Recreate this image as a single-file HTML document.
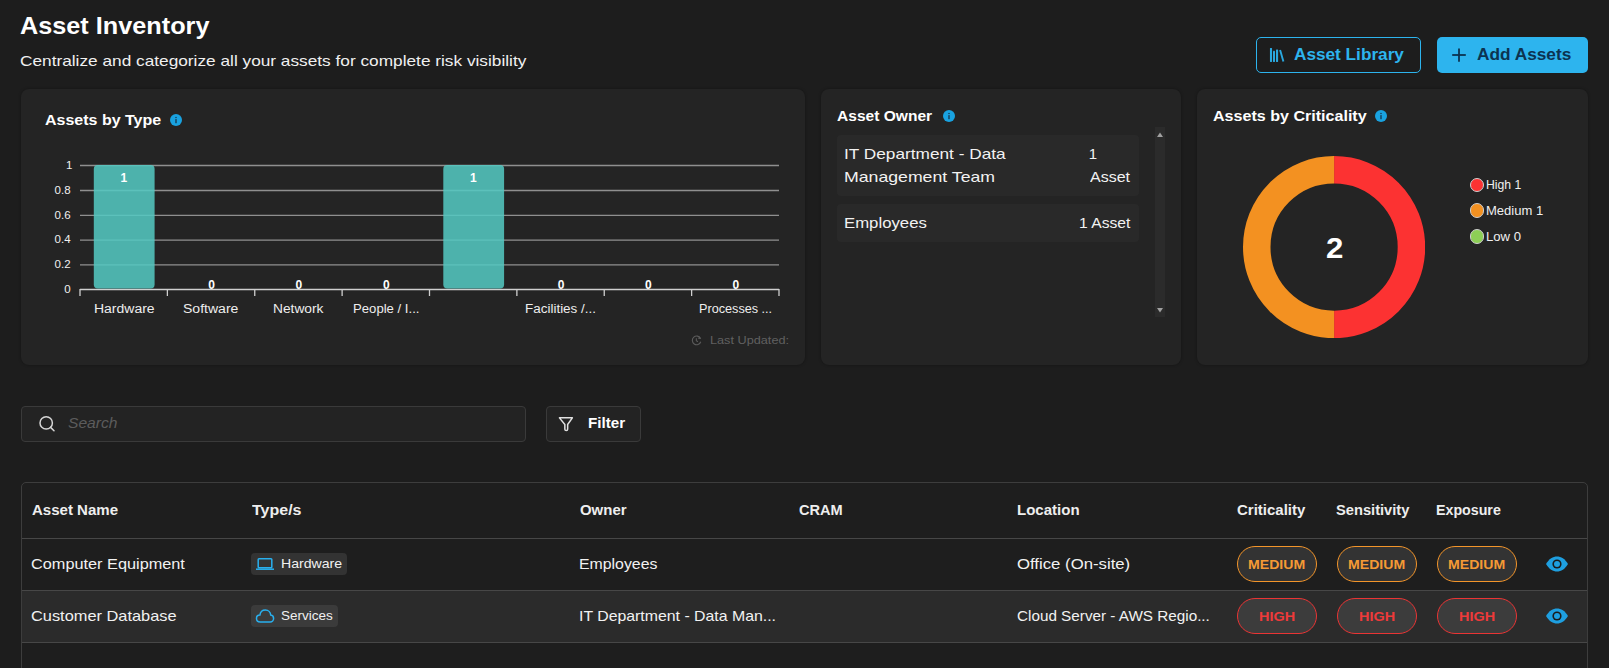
<!DOCTYPE html>
<html><head><meta charset="utf-8"><title>Asset Inventory</title>
<style>
html,body{margin:0;padding:0;}
body{width:1609px;height:668px;overflow:hidden;background:#1d1d1d;position:relative;font-family:"Liberation Sans",sans-serif;}
.a{position:absolute;box-sizing:border-box;}
.t{position:absolute;white-space:nowrap;line-height:1;transform-origin:0 0;}
</style></head><body>

<div class="a" style="left:1256px;top:37px;width:165px;height:36px;border:1px solid #2db4ee;border-radius:5px;"></div>
<div class="a" style="left:1437px;top:37px;width:151px;height:36px;background:#2db4ee;border-radius:5px;"></div>
<svg class="a" style="left:1268px;top:46px" width="18" height="18" viewBox="0 0 18 18"><g fill="#2aa8df"><rect x="1.95" y="1.9" width="2.1" height="14.1" rx="0.4"/><rect x="5.0" y="4.8" width="2.0" height="11.2" rx="0.4"/><rect x="8.0" y="3.6" width="2.1" height="12.4" rx="0.4"/></g><line x1="12.1" y1="3.9" x2="15.4" y2="15.6" stroke="#2aa8df" stroke-width="1.9"/></svg>
<svg class="a" style="left:1450px;top:46px" width="18" height="18" viewBox="0 0 18 18"><g stroke="#0c3350" stroke-width="1.8"><line x1="9" y1="2.5" x2="9" y2="15.7"/><line x1="2.2" y1="9" x2="15.8" y2="9"/></g></svg>
<div class="a" style="left:21px;top:89px;width:784px;height:276px;background:#242424;border-radius:8px;box-shadow:0 0 3px rgba(0,0,0,0.35);"></div>
<div class="a" style="left:821px;top:89px;width:360px;height:276px;background:#242424;border-radius:8px;box-shadow:0 0 3px rgba(0,0,0,0.35);"></div>
<div class="a" style="left:1197px;top:89px;width:391px;height:276px;background:#242424;border-radius:8px;box-shadow:0 0 3px rgba(0,0,0,0.35);"></div>
<svg class="a" style="left:170px;top:114px" width="12" height="12" viewBox="0 0 12 12"><circle cx="6" cy="6" r="6" fill="#19a2e0"/><rect x="5.25" y="5.1" width="1.5" height="4.1" fill="#17425e"/><rect x="5.25" y="2.9" width="1.5" height="1.2" fill="#17425e"/></svg>
<svg class="a" style="left:943px;top:110px" width="12" height="12" viewBox="0 0 12 12"><circle cx="6" cy="6" r="6" fill="#19a2e0"/><rect x="5.25" y="5.1" width="1.5" height="4.1" fill="#17425e"/><rect x="5.25" y="2.9" width="1.5" height="1.2" fill="#17425e"/></svg>
<svg class="a" style="left:1375px;top:110px" width="12" height="12" viewBox="0 0 12 12"><circle cx="6" cy="6" r="6" fill="#19a2e0"/><rect x="5.25" y="5.1" width="1.5" height="4.1" fill="#17425e"/><rect x="5.25" y="2.9" width="1.5" height="1.2" fill="#17425e"/></svg>
<svg class="a" style="left:0;top:0" width="805" height="366" viewBox="0 0 805 366"><line x1="80" y1="165.5" x2="779" y2="165.5" stroke="#8f8f8f" stroke-width="1.3"/><line x1="80" y1="190.5" x2="779" y2="190.5" stroke="#8f8f8f" stroke-width="1.3"/><line x1="80" y1="215.3" x2="779" y2="215.3" stroke="#8f8f8f" stroke-width="1.3"/><line x1="80" y1="240.1" x2="779" y2="240.1" stroke="#8f8f8f" stroke-width="1.3"/><line x1="80" y1="264.9" x2="779" y2="264.9" stroke="#8f8f8f" stroke-width="1.3"/><line x1="80" y1="289.5" x2="779" y2="289.5" stroke="#cfcfcf" stroke-width="1.3"/><line x1="80.00" y1="289" x2="80.00" y2="296" stroke="#cfcfcf" stroke-width="1.3"/><line x1="167.38" y1="289" x2="167.38" y2="296" stroke="#cfcfcf" stroke-width="1.3"/><line x1="254.75" y1="289" x2="254.75" y2="296" stroke="#cfcfcf" stroke-width="1.3"/><line x1="342.12" y1="289" x2="342.12" y2="296" stroke="#cfcfcf" stroke-width="1.3"/><line x1="429.50" y1="289" x2="429.50" y2="296" stroke="#cfcfcf" stroke-width="1.3"/><line x1="516.88" y1="289" x2="516.88" y2="296" stroke="#cfcfcf" stroke-width="1.3"/><line x1="604.25" y1="289" x2="604.25" y2="296" stroke="#cfcfcf" stroke-width="1.3"/><line x1="691.62" y1="289" x2="691.62" y2="296" stroke="#cfcfcf" stroke-width="1.3"/><line x1="779.00" y1="289" x2="779.00" y2="296" stroke="#cfcfcf" stroke-width="1.3"/><rect x="93.80" y="165" width="60.8" height="123.6" rx="4" fill="rgba(84,202,194,0.86)"/><rect x="443.30" y="165" width="60.8" height="123.6" rx="4" fill="rgba(84,202,194,0.86)"/></svg>
<svg class="a" style="left:690.1px;top:334.1px" width="13" height="13" viewBox="0 0 15 15"><path d="M12.2 5.2 A5 5 0 1 0 12.4 9" stroke="#5c5c5c" stroke-width="1.3" fill="none"/><path d="M10.6 2.6 L12.9 5.6 L9.4 5.9Z" fill="#5c5c5c"/><path d="M7.3 4.8 V7.8 L9.2 9" stroke="#5c5c5c" stroke-width="1.2" fill="none"/></svg>
<div class="a" style="left:837px;top:135px;width:302px;height:61px;background:#292929;border-radius:4px;"></div>
<div class="a" style="left:837px;top:204px;width:302px;height:38px;background:#292929;border-radius:4px;"></div>
<div class="a" style="left:1155px;top:127px;width:10px;height:190px;background:#2b2b2b;"></div>
<svg class="a" style="left:1155px;top:127px" width="10" height="190" viewBox="0 0 10 190"><path d="M2 10 L5 5.5 L8 10Z" fill="#a0a0a0"/><path d="M2 181 L5 185.5 L8 181Z" fill="#a0a0a0"/></svg>
<svg class="a" style="left:1243.2px;top:156.20000000000002px" width="182.2" height="182.2" viewBox="0 0 182.2 182.2"><path d="M91.1 13.75 A77.35 77.35 0 0 1 91.1 168.45" stroke="#fc3232" stroke-width="27.499999999999993" fill="none"/><path d="M91.1 168.45 A77.35 77.35 0 0 1 91.1 13.75" stroke="#f39121" stroke-width="27.499999999999993" fill="none"/></svg>
<div class="a" style="left:1469.6px;top:177.6px;width:14.8px;height:14.8px;border-radius:50%;background:#fc3232;border:1.3px solid #cfcfcf;"></div>
<div class="a" style="left:1469.6px;top:203.29999999999998px;width:14.8px;height:14.8px;border-radius:50%;background:#f39121;border:1.3px solid #cfcfcf;"></div>
<div class="a" style="left:1469.6px;top:229.1px;width:14.8px;height:14.8px;border-radius:50%;background:#8dcf56;border:1.3px solid #cfcfcf;"></div>
<div class="a" style="left:21px;top:406px;width:505px;height:36px;border:1px solid #3a3a3a;background:#232323;border-radius:4px;"></div>
<svg class="a" style="left:36px;top:413px" width="22" height="22" viewBox="0 0 22 22"><circle cx="10.2" cy="9.9" r="6.2" stroke="#d6d6d6" stroke-width="1.5" fill="none"/><line x1="14.6" y1="14.4" x2="18" y2="17.8" stroke="#d6d6d6" stroke-width="1.5" stroke-linecap="round"/></svg>
<div class="a" style="left:546px;top:406px;width:95px;height:36px;border:1px solid #3a3a3a;background:#232323;border-radius:4px;"></div>
<svg class="a" style="left:556px;top:414px" width="20" height="20" viewBox="0 0 20 20"><path d="M3.45 3.85 H16.35 L11.65 10.5 V15.2 A1.4 1.4 0 0 1 8.85 15.2 V10.5 Z" stroke="#e0e0e0" stroke-width="1.5" fill="none" stroke-linejoin="round"/></svg>
<div class="a" style="left:21px;top:482px;width:1567px;height:200px;border:1px solid #3d3d3d;border-radius:5px;background:#1e1e1e;"></div>
<div class="a" style="left:22px;top:591px;width:1565px;height:51px;background:#2b2b2b;"></div>
<div class="a" style="left:22px;top:538px;width:1565px;height:1px;background:#474747;"></div>
<div class="a" style="left:22px;top:590px;width:1565px;height:1px;background:#474747;"></div>
<div class="a" style="left:22px;top:642px;width:1565px;height:1px;background:#474747;"></div>
<div class="a" style="left:251px;top:553px;width:96px;height:22px;background:#333333;border-radius:4px;"></div>
<div class="a" style="left:251px;top:605px;width:87px;height:22px;background:#3b3b3b;border-radius:4px;"></div>
<svg class="a" style="left:255px;top:556px" width="20" height="16" viewBox="0 0 20 16"><rect x="3.2" y="2.8" width="13.6" height="9" rx="0.8" stroke="#29b0ee" stroke-width="1.5" fill="none"/><line x1="1" y1="13.2" x2="19" y2="13.2" stroke="#29b0ee" stroke-width="1.5"/></svg>
<svg class="a" style="left:255px;top:607px" width="20" height="18" viewBox="0 0 20 18"><path d="M5.2 15 C2.8 15 1.5 13.3 1.5 11.5 C1.5 9.6 3 8.1 4.9 8.1 C5.3 5.1 7.6 3 10.4 3 C13.3 3 15.5 5.2 15.7 8 C17.3 8.2 18.6 9.6 18.6 11.5 C18.6 13.4 17.1 15 15.2 15 Z" stroke="#29b0ee" stroke-width="1.5" fill="none"/></svg>
<div class="a" style="left:1237px;top:546px;width:80px;height:36px;border:1.3px solid #f3952a;border-radius:18px;background:#333333;"></div>
<div class="a" style="left:1337px;top:546px;width:80px;height:36px;border:1.3px solid #f3952a;border-radius:18px;background:#333333;"></div>
<div class="a" style="left:1437px;top:546px;width:80px;height:36px;border:1.3px solid #f3952a;border-radius:18px;background:#333333;"></div>
<div class="a" style="left:1237px;top:598px;width:80px;height:36px;border:1.3px solid #ea3434;border-radius:18px;background:#3c3c3c;"></div>
<div class="a" style="left:1337px;top:598px;width:80px;height:36px;border:1.3px solid #ea3434;border-radius:18px;background:#3c3c3c;"></div>
<div class="a" style="left:1437px;top:598px;width:80px;height:36px;border:1.3px solid #ea3434;border-radius:18px;background:#3c3c3c;"></div>
<svg class="a" style="left:1545px;top:556px" width="24" height="16" viewBox="0 0 24 16"><path d="M1 8 C4 2.8 8 0.5 12 0.5 C16 0.5 20 2.8 23 8 C20 13.2 16 15.5 12 15.5 C8 15.5 4 13.2 1 8Z" fill="#1e9fe0"/><circle cx="12" cy="8" r="4.6" fill="#1b1b1b"/><circle cx="12" cy="8" r="3.0" fill="#1e9fe0"/></svg>
<svg class="a" style="left:1545px;top:608px" width="24" height="16" viewBox="0 0 24 16"><path d="M1 8 C4 2.8 8 0.5 12 0.5 C16 0.5 20 2.8 23 8 C20 13.2 16 15.5 12 15.5 C8 15.5 4 13.2 1 8Z" fill="#1e9fe0"/><circle cx="12" cy="8" r="4.6" fill="#1b1b1b"/><circle cx="12" cy="8" r="3.0" fill="#1e9fe0"/></svg>
<span class="t" id="t_title" style="left:20.15px;top:14.21px;font-size:24px;font-weight:700;color:#ffffff;transform:scaleX(1.0520);">Asset Inventory</span>
<span class="t" id="t_sub" style="left:20.05px;top:53.01px;font-size:15px;font-weight:400;color:#f0f0f0;transform:scaleX(1.1503);">Centralize and categorize all your assets for complete risk visibility</span>
<span class="t" id="t_lib" style="left:1294.20px;top:47.20px;font-size:16px;font-weight:700;color:#2db4ee;transform:scaleX(1.0745);">Asset Library</span>
<span class="t" id="t_add" style="left:1477.20px;top:46.81px;font-size:16px;font-weight:700;color:#0c3350;transform:scaleX(1.0782);">Add Assets</span>
<span class="t" id="t_c1" style="left:45.40px;top:112.90px;font-size:14.7px;font-weight:700;color:#ffffff;transform:scaleX(1.0887);">Assets by Type</span>
<span class="t" id="t_c2" style="left:836.90px;top:109.21px;font-size:14.7px;font-weight:700;color:#ffffff;transform:scaleX(1.0589);">Asset Owner</span>
<span class="t" id="t_c3" style="left:1213.00px;top:109.01px;font-size:14.7px;font-weight:700;color:#ffffff;transform:scaleX(1.0943);">Assets by Criticality</span>
<span class="t" id="t_o1" style="left:844.45px;top:146.01px;font-size:15px;font-weight:400;color:#f2f2f2;transform:scaleX(1.1493);">IT Department - Data</span>
<span class="t" id="t_o2" style="left:844.42px;top:168.81px;font-size:15px;font-weight:400;color:#f2f2f2;transform:scaleX(1.1787);">Management Team</span>
<span class="t" id="t_o3" style="left:1088.70px;top:146.01px;font-size:15px;font-weight:400;color:#f2f2f2;">1</span>
<span class="t" id="t_o4" style="left:1089.70px;top:168.81px;font-size:15px;font-weight:400;color:#f2f2f2;transform:scaleX(1.0658);">Asset</span>
<span class="t" id="t_o5" style="left:844.48px;top:215.42px;font-size:15px;font-weight:400;color:#f2f2f2;transform:scaleX(1.1164);">Employees</span>
<span class="t" id="t_o6" style="left:1079.06px;top:215.42px;font-size:15px;font-weight:400;color:#f2f2f2;transform:scaleX(1.0437);">1 Asset</span>
<span class="t" id="y0" style="left:65.90px;top:159.91px;font-size:11.5px;font-weight:400;color:#f0f0f0;">1</span>
<span class="t" id="y1" style="left:54.60px;top:184.91px;font-size:11.5px;font-weight:400;color:#f0f0f0;">0.8</span>
<span class="t" id="y2" style="left:54.60px;top:209.70px;font-size:11.5px;font-weight:400;color:#f0f0f0;">0.6</span>
<span class="t" id="y3" style="left:54.60px;top:234.41px;font-size:11.5px;font-weight:400;color:#f0f0f0;">0.4</span>
<span class="t" id="y4" style="left:54.60px;top:259.20px;font-size:11.5px;font-weight:400;color:#f0f0f0;">0.2</span>
<span class="t" id="y5" style="left:64.20px;top:283.91px;font-size:11.5px;font-weight:400;color:#f0f0f0;">0</span>
<span class="t" id="x0" style="left:93.64px;top:303.10px;font-size:12px;font-weight:400;color:#eeeeee;transform:scaleX(1.1647);">Hardware</span>
<span class="t" id="x1" style="left:183.43px;top:303.10px;font-size:12px;font-weight:400;color:#eeeeee;transform:scaleX(1.1696);">Software</span>
<span class="t" id="x2" style="left:273.15px;top:303.10px;font-size:12px;font-weight:400;color:#eeeeee;transform:scaleX(1.1465);">Network</span>
<span class="t" id="x3" style="left:352.61px;top:303.10px;font-size:12px;font-weight:400;color:#eeeeee;transform:scaleX(1.0949);">People / I...</span>
<span class="t" id="x5" style="left:524.88px;top:303.10px;font-size:12px;font-weight:400;color:#eeeeee;transform:scaleX(1.1210);">Facilities /...</span>
<span class="t" id="x7" style="left:698.65px;top:303.10px;font-size:12px;font-weight:400;color:#eeeeee;transform:scaleX(1.0544);">Processes ...</span>
<span class="t" id="v0" style="left:120.49px;top:172.01px;font-size:12px;font-weight:700;color:#ffffff;">1</span>
<span class="t" id="v1" style="left:208.16px;top:278.51px;font-size:12px;font-weight:700;color:#ffffff;">0</span>
<span class="t" id="v2" style="left:295.54px;top:278.51px;font-size:12px;font-weight:700;color:#ffffff;">0</span>
<span class="t" id="v3" style="left:382.91px;top:278.51px;font-size:12px;font-weight:700;color:#ffffff;">0</span>
<span class="t" id="v4" style="left:469.99px;top:172.01px;font-size:12px;font-weight:700;color:#ffffff;">1</span>
<span class="t" id="v5" style="left:557.66px;top:278.51px;font-size:12px;font-weight:700;color:#ffffff;">0</span>
<span class="t" id="v6" style="left:645.04px;top:278.51px;font-size:12px;font-weight:700;color:#ffffff;">0</span>
<span class="t" id="v7" style="left:732.41px;top:278.51px;font-size:12px;font-weight:700;color:#ffffff;">0</span>
<span class="t" id="t_last" style="left:710.35px;top:335.00px;font-size:11px;font-weight:400;color:#606060;transform:scaleX(1.1537);">Last Updated:</span>
<span class="t" id="lg1" style="left:1486.02px;top:179.21px;font-size:12.5px;font-weight:400;color:#f0f0f0;transform:scaleX(0.9771);">High 1</span>
<span class="t" id="lg2" style="left:1485.96px;top:205.01px;font-size:12.5px;font-weight:400;color:#f0f0f0;transform:scaleX(1.0426);">Medium 1</span>
<span class="t" id="lg3" style="left:1485.95px;top:230.80px;font-size:12.5px;font-weight:400;color:#f0f0f0;transform:scaleX(1.0500);">Low 0</span>
<span class="t" id="donut2" style="left:1326.16px;top:233.01px;font-size:30px;font-weight:700;color:#ffffff;transform:scaleX(1.0400);">2</span>
<span class="t" id="t_search" style="left:68.12px;top:416.20px;font-size:14.5px;font-weight:400;color:#5c5c5c;transform:scaleX(1.0778);font-style:italic;">Search</span>
<span class="t" id="t_filter" style="left:587.92px;top:415.81px;font-size:14px;font-weight:700;color:#ffffff;transform:scaleX(1.0848);">Filter</span>
<span class="t" id="h0" style="left:31.90px;top:503.01px;font-size:14px;font-weight:700;color:#eeeeee;transform:scaleX(1.0737);">Asset Name</span>
<span class="t" id="h1" style="left:251.70px;top:503.01px;font-size:14px;font-weight:700;color:#eeeeee;transform:scaleX(1.1419);">Type/s</span>
<span class="t" id="h2" style="left:579.70px;top:503.01px;font-size:14px;font-weight:700;color:#eeeeee;transform:scaleX(1.0674);">Owner</span>
<span class="t" id="h3" style="left:798.70px;top:503.01px;font-size:14px;font-weight:700;color:#eeeeee;transform:scaleX(1.0415);">CRAM</span>
<span class="t" id="h4" style="left:1016.63px;top:503.01px;font-size:14px;font-weight:700;color:#eeeeee;transform:scaleX(1.0737);">Location</span>
<span class="t" id="h5" style="left:1237.10px;top:503.01px;font-size:14px;font-weight:700;color:#eeeeee;transform:scaleX(1.0703);">Criticality</span>
<span class="t" id="h6" style="left:1336.25px;top:503.01px;font-size:14px;font-weight:700;color:#eeeeee;transform:scaleX(1.0478);">Sensitivity</span>
<span class="t" id="h7" style="left:1435.98px;top:503.01px;font-size:14px;font-weight:700;color:#eeeeee;transform:scaleX(1.0159);">Exposure</span>
<span class="t" id="r0_0" style="left:31.11px;top:556.20px;font-size:15px;font-weight:400;color:#f2f2f2;transform:scaleX(1.0858);">Computer Equipment</span>
<span class="t" id="r0_1" style="left:578.64px;top:556.20px;font-size:15px;font-weight:400;color:#f2f2f2;transform:scaleX(1.0562);">Employees</span>
<span class="t" id="r0_2" style="left:1016.58px;top:556.20px;font-size:15px;font-weight:400;color:#f2f2f2;transform:scaleX(1.1160);">Office (On-site)</span>
<span class="t" id="r1_0" style="left:31.11px;top:608.01px;font-size:15px;font-weight:400;color:#f2f2f2;transform:scaleX(1.0917);">Customer Database</span>
<span class="t" id="r1_1" style="left:578.64px;top:608.01px;font-size:15px;font-weight:400;color:#f2f2f2;transform:scaleX(1.0565);">IT Department - Data Man...</span>
<span class="t" id="r1_2" style="left:1016.68px;top:608.01px;font-size:15px;font-weight:400;color:#f2f2f2;transform:scaleX(1.0176);">Cloud Server - AWS Regio...</span>
<span class="t" id="chip0" style="left:281.12px;top:557.10px;font-size:13px;font-weight:400;color:#f0f0f0;transform:scaleX(1.0836);">Hardware</span>
<span class="t" id="chip1" style="left:281.16px;top:609.10px;font-size:13px;font-weight:400;color:#f0f0f0;transform:scaleX(1.0375);">Services</span>
<span class="t" id="b0_0" style="left:1247.75px;top:557.90px;font-size:13.5px;font-weight:700;color:#f59a35;transform:scaleX(1.0453);">MEDIUM</span>
<span class="t" id="b0_1" style="left:1347.75px;top:557.90px;font-size:13.5px;font-weight:700;color:#f59a35;transform:scaleX(1.0453);">MEDIUM</span>
<span class="t" id="b0_2" style="left:1447.75px;top:557.90px;font-size:13.5px;font-weight:700;color:#f59a35;transform:scaleX(1.0453);">MEDIUM</span>
<span class="t" id="b1_0" style="left:1258.73px;top:609.81px;font-size:13.5px;font-weight:700;color:#ef3a3a;transform:scaleX(1.0688);">HIGH</span>
<span class="t" id="b1_1" style="left:1358.73px;top:609.81px;font-size:13.5px;font-weight:700;color:#ef3a3a;transform:scaleX(1.0688);">HIGH</span>
<span class="t" id="b1_2" style="left:1458.73px;top:609.81px;font-size:13.5px;font-weight:700;color:#ef3a3a;transform:scaleX(1.0688);">HIGH</span>
</body></html>
